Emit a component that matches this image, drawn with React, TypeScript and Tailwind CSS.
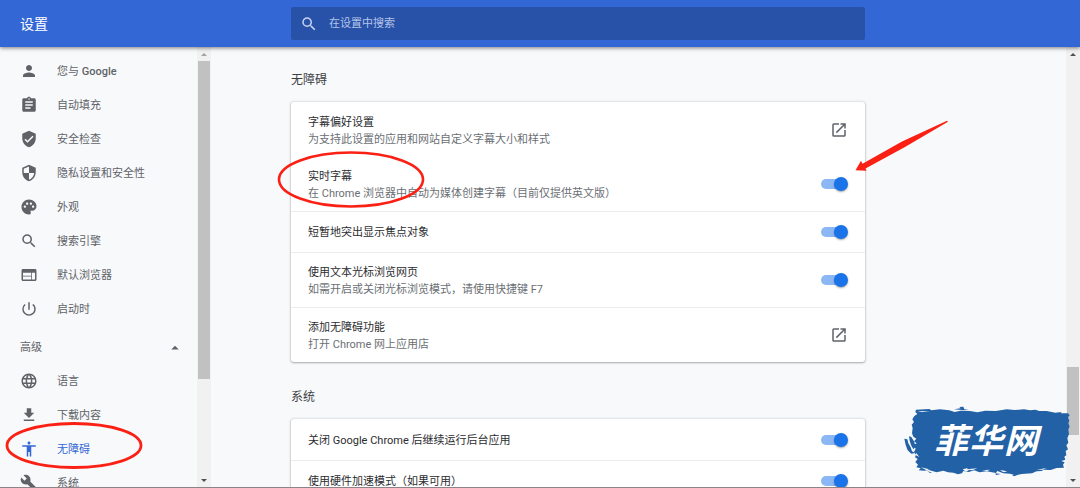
import type { ReactNode } from 'react';
import type { IconType } from 'react-icons';
import {
  MdAccessibility,
  MdArrowDropUp,
  MdAssignment,
  MdBuild,
  MdFileDownload,
  MdLanguage,
  MdOpenInNew,
  MdPalette,
  MdPerson,
  MdPowerSettingsNew,
  MdSearch,
  MdSecurity,
  MdVerifiedUser,
  MdWeb,
} from 'react-icons/md';

interface NavEntry {
  label: ReactNode;
  icon: IconType;
  active?: boolean;
}

const BASIC: NavEntry[] = [
  { label: <>您与 <span className="font-medium">Google</span></>, icon: MdPerson },
  { label: '自动填充', icon: MdAssignment },
  { label: '安全检查', icon: MdVerifiedUser },
  { label: '隐私设置和安全性', icon: MdSecurity },
  { label: '外观', icon: MdPalette },
  { label: '搜索引擎', icon: MdSearch },
  { label: '默认浏览器', icon: MdWeb },
  { label: '启动时', icon: MdPowerSettingsNew },
];

const ADVANCED: NavEntry[] = [
  { label: '语言', icon: MdLanguage },
  { label: '下载内容', icon: MdFileDownload },
  { label: '无障碍', icon: MdAccessibility, active: true },
  { label: '系统', icon: MdBuild },
];

function NavList({ items }: { items: NavEntry[] }) {
  return (
    <ul>
      {items.map(({ label, icon: Icon, active }, i) => (
        <li key={i}>
          <a
            href="#"
            className={`flex h-[34px] items-center gap-[19px] pl-5 ${active ? 'text-[#3367d6]' : 'text-[#5f6368]'}`}
          >
            <Icon className="size-[18px] shrink-0" />
            <span>{label}</span>
          </a>
        </li>
      ))}
    </ul>
  );
}

function Arrow({ down, dim }: { down?: boolean; dim?: boolean }) {
  return (
    <span className="flex h-[14px] shrink-0 items-center justify-center">
      <svg viewBox="0 0 6 3" className={`h-[3px] w-[6px] ${dim ? 'fill-[#a3a3a3]' : 'fill-[#505050]'}`}>
        <path d={down ? 'M0 0h6L3 3z' : 'M0 3h6L3 0z'} />
      </svg>
    </span>
  );
}

// 滚动条：children 为轨道中间部分
function Scrollbar({ children, atTop }: { children: ReactNode; atTop?: boolean }) {
  return (
    <div className="flex w-[14px] shrink-0 flex-col bg-[#f1f1f1] px-px" aria-hidden="true">
      <Arrow dim={atTop} />
      {children}
      <Arrow down />
    </div>
  );
}

interface RowProps {
  title: string;
  sub?: string;
  id?: string;
  line?: boolean;
}

function Row({ title, sub, id, line }: RowProps) {
  return (
    <div className={`flex min-h-10 items-center justify-between px-[17px] ${line ? 'box-content border-t border-[#ececee]' : ''}`}>
      <div className={sub ? 'pt-[11px] pb-[9px]' : ''}>
        {id ? (
          <label htmlFor={id} className="block text-[#2b2c2f]">{title}</label>
        ) : (
          <p className="text-[#2b2c2f]">{title}</p>
        )}
        {sub && <p className="text-[#6b6f74]">{sub}</p>}
      </div>
      {id ? (
        <input
          id={id}
          type="checkbox"
          role="switch"
          defaultChecked
          className="relative h-[14px] w-[27px] shrink-0 appearance-none before:absolute before:top-[2px] before:left-0 before:h-[10px] before:w-6 before:rounded-full before:bg-[#bdc1c6] after:absolute after:top-0 after:left-0 after:size-[14px] after:rounded-full after:bg-white after:shadow-[0_1px_2px_rgba(0,0,0,0.35)] checked:before:bg-[#8cb7f5] checked:after:left-[13px] checked:after:bg-[#1a73e8]"
        />
      ) : (
        <button type="button" aria-label={title} className="text-[#5f6368]">
          <MdOpenInNew className="size-[18px]" />
        </button>
      )}
    </div>
  );
}

function Section({ title, children }: { title: string; children: ReactNode }) {
  return (
    <section>
      <h2 className="pt-px pb-[11px] text-xs leading-[21px] text-[#3c4043]">{title}</h2>
      <div className="rounded-[3px] bg-white pt-px shadow-[0_1px_2px_rgba(60,64,67,0.35),0_0_2px_1px_rgba(60,64,67,0.12)]">
        {children}
      </div>
    </section>
  );
}

// 红色标注：两个圈和一个箭头
function Marks() {
  return (
    <svg className="pointer-events-none absolute top-0 left-0 z-20 h-[488px] w-[1080px]" viewBox="0 0 1080 488" fill="none">
      <ellipse cx="74" cy="445.5" rx="67" ry="22" stroke="#fb2014" strokeWidth="2.8" />
      <ellipse cx="351" cy="179.5" rx="72" ry="27" stroke="#fb2014" strokeWidth="2.6" />
      <path d="M947 120.7 L902 141.5 L862.5 163.8 L861 160.8 L855.5 170.2 L866.5 170.7 L865.5 168.6 L905 147 L948 121.7 Z" fill="#fb2014" />
    </svg>
  );
}

function Watermark() {
  return (
    <div className="pointer-events-none absolute right-0 -bottom-px z-10 h-[98px] w-[190px]">
      <svg viewBox="0 0 570 294" className="absolute inset-0 h-full w-full" fill="#2261a6">
        <path d="M78 59 L118 57 L124 61 L150 58 L178 61 L194 66 L212 62 L222 62 L240 63 L262 67 L286 62 L318 63 L350 58 L374 60 L402 58 L420 61 L436 59 L448 63 L470 63 L496 68 L515 66 L512 70 L534 70 L539 76 L534 82 L538 92 L535 99 L539 110 L535 118 L537 132 L532 145 L535 158 L529 166 L534 178 L527 183 L529 196 L523 200 L526 209 L514 213 L524 217 L519 224 L522 233 L500 234 L482 240 L460 239 L456 243 L440 244 L426 250 L395 252 L376 256 L360 251 L340 250 L322 243 L318 249 L290 244 L268 247 L253 241 L236 246 L220 243 L216 250 L204 253 L190 248 L174 247 L160 242 L140 247 L116 240 L102 242 L86 241 L92 235 L79 232 L84 224 L76 216 L83 207 L75 202 L78 194 L72 186 L77 176 L70 166 L80 160 L72 154 L79 146 L70 140 L66 130 L68 114 L65 104 L72 96 L67 88 L73 78 L82 72 L76 66 Z" />
        <path d="M43 146 L52 148 L55 160 L62 172 L66 184 L76 189 L64 191 L53 181 L47 165 Z M57 139 L64 141 L72 154 L77 170 L70 178 L63 165 L59 152 Z" />
        <path d="M192 58 L212 55 L208 51 L220 50 L223 58 L236 60 L216 60 Z M112 243 L126 248 L120 249 Z M316 250 L332 252 L318 255 Z M366 255 L384 254 L372 259 Z" />
        <path d="M78 188 L88 201 L78 196 Z M92 232 L118 238 L124 235 L110 241 Z M218 238 L234 234 L230 238 L262 235 L246 241 L238 239 L228 245 Z M276 241 L300 239 L292 243 Z M330 240 L352 244 L340 247 Z M440 239 L470 234 L458 239 Z M82 63 L120 64 L96 66 Z" fill="#f8f9fb" />
      </svg>
      <p className="absolute top-[29px] left-[44px] flex items-center gap-px text-[34px] leading-[44px] font-bold text-white italic">
        <span>菲</span>
        <span>华</span>
        <span>网</span>
      </p>
    </div>
  );
}

export default function App() {
  return (
    <div className="relative flex h-screen flex-col overflow-hidden border-b border-[#8d8388] bg-[#f8f9fb] font-[Roboto,'Noto_Sans_CJK_SC',sans-serif] text-[11px] leading-[17px]">
      <header className="z-10 flex h-[47px] shrink-0 items-center bg-[#3367d6] shadow-[0_1px_4px_rgba(0,0,0,0.5)]">
        <h1 className="w-[291px] shrink-0 pl-5 text-sm text-white">设置</h1>
        <label className="flex h-[33px] w-full max-w-[574px] items-center gap-[11px] rounded-xs bg-[#2851a8] px-[9px] text-[#c6d3f1]">
          <MdSearch className="size-[18px] shrink-0" />
          <input
            type="search"
            aria-label="在设置中搜索"
            placeholder="在设置中搜索"
            className="w-full bg-transparent outline-none placeholder:text-[#b4c4e8]"
          />
        </label>
      </header>

      <div className="flex min-h-0 flex-1">
        <aside className="flex w-[211px] shrink-0">
          <nav className="flex-1 overflow-hidden pt-[7px]">
            <NavList items={BASIC} />
            <button type="button" className="mt-[5px] flex h-[33px] w-full items-center justify-between pr-[13px] pl-5 text-[#5f6368]">
              高级
              <MdArrowDropUp className="size-[18px]" />
            </button>
            <NavList items={ADVANCED} />
          </nav>
          <Scrollbar atTop>
            <div className="flex-[318] bg-[#c1c1c1]" />
            <div className="flex-[94]" />
          </Scrollbar>
        </aside>

        <main className="min-w-0 flex-1 overflow-hidden px-20 pt-[22px]">
          <div className="flex max-w-[574px] flex-col gap-6">
            <Section title="无障碍">
              <Row title="字幕偏好设置" sub="为支持此设置的应用和网站自定义字幕大小和样式" />
              <Row id="live-caption" title="实时字幕" sub="在 Chrome 浏览器中自动为媒体创建字幕（目前仅提供英文版）" />
              <Row id="focus-highlight" title="短暂地突出显示焦点对象" line />
              <Row id="caret-browsing" title="使用文本光标浏览网页" sub="如需开启或关闭光标浏览模式，请使用快捷键 F7" line />
              <Row title="添加无障碍功能" sub="打开 Chrome 网上应用店" line />
            </Section>
            <Section title="系统">
              <Row id="background-apps" title="关闭 Google Chrome 后继续运行后台应用" />
              <Row id="hardware-accel" title="使用硬件加速模式（如果可用）" line />
            </Section>
          </div>
        </main>

        <Scrollbar>
          <div className="flex-[306]" />
          <div className="flex-[68] bg-[#c1c1c1]" />
          <div className="flex-[38]" />
        </Scrollbar>
      </div>

      <Marks />
      <Watermark />
    </div>
  );
}
